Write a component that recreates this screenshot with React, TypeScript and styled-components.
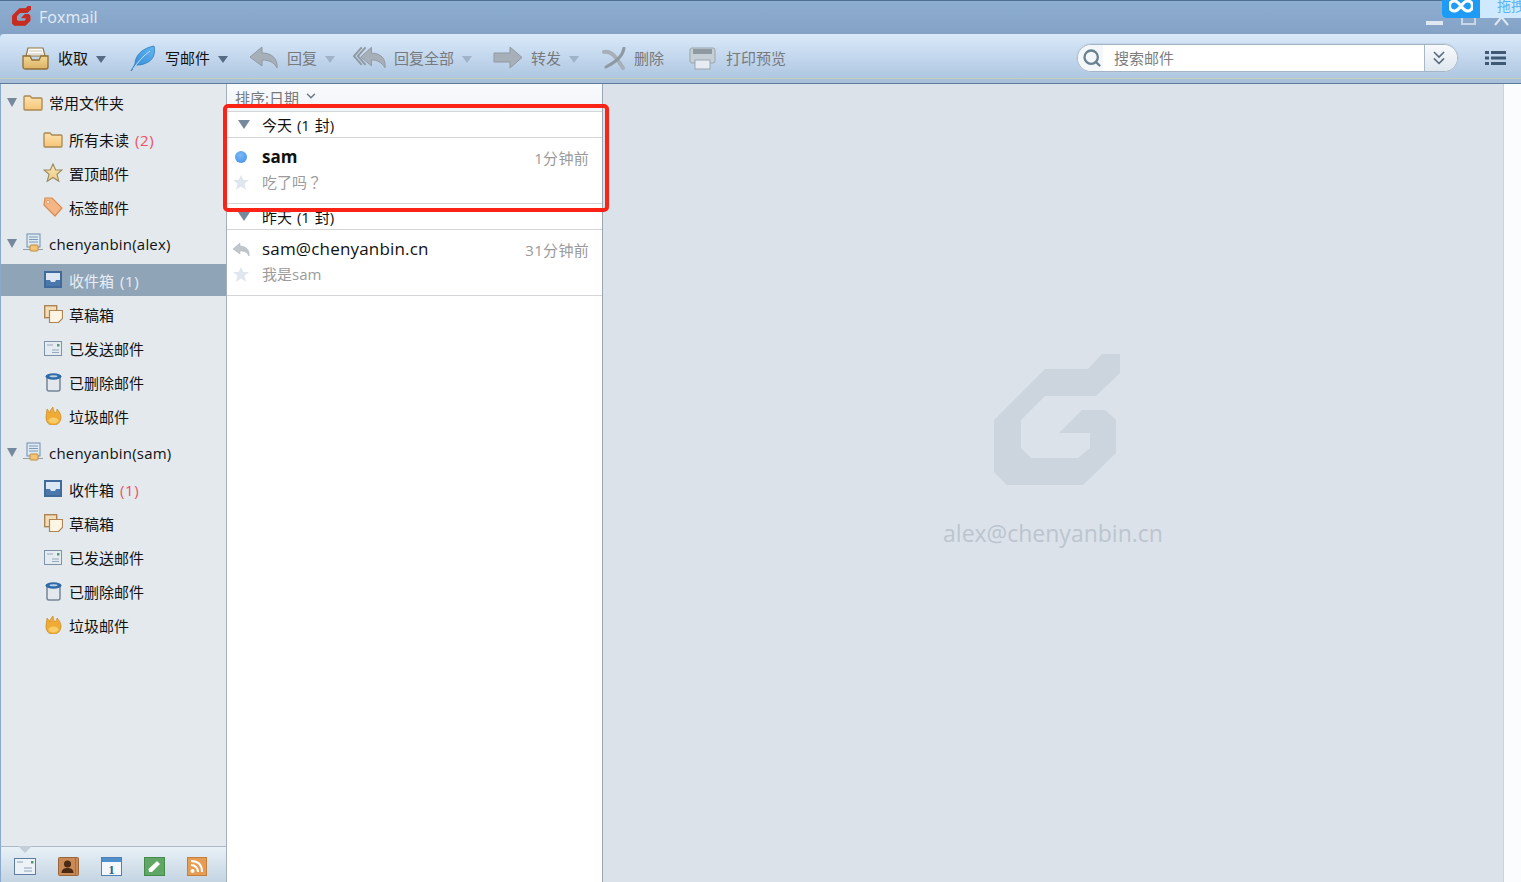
import React from "react";
import styled, { createGlobalStyle } from "styled-components";
import { Search, ChevronsDown, ChevronDown } from "lucide-react";

const Global = createGlobalStyle`
  html, body { margin: 0; padding: 0; height: 100%; overflow: hidden; background: #dbe2e9; }
  #root { height: 100%; }
  * { box-sizing: border-box; }
`;

const FONT = `"Open Sans", "Noto Sans CJK SC", sans-serif`;

const Window = styled.div`
  position: relative;
  width: 1521px;
  height: 882px;
  display: flex;
  flex-direction: column;
  overflow: hidden;
  font-family: ${FONT};
  font-size: 15px;
  color: #111;
  background: #8aa9cc;
`;

const TitleBar = styled.div`
  height: 34px;
  flex: none;
  display: flex;
  align-items: center;
  gap: 8px;
  padding: 0 0 0 12px;
  border-top: 1px solid #4e6e92;
  background: linear-gradient(#8eaed1, #83a2c6);
`;

const LogoSlot = styled.span`
  display: flex;
  margin-top: -3px;
`;

const AppTitle = styled.span`
  color: #e3ecf5;
  font-size: 16px;
  letter-spacing: 0.1px;
  margin-top: -1px;
`;

const WinControls = styled.div`
  position: absolute;
  top: 14px;
  right: 12px;
  display: flex;
  align-items: flex-start;
  gap: 18px;
  height: 12px;
`;

const DragWidget = styled.div`
  position: absolute;
  top: 0;
  right: 0;
  width: 79px;
  height: 18px;
  display: flex;
  overflow: hidden;
  border-bottom-left-radius: 4px;
  background: #cfeaff;
`;

const DragBlue = styled.div`
  width: 38px;
  flex: none;
  display: flex;
  align-items: flex-start;
  justify-content: center;
  background: #1e9cf5;
`;

const DragText = styled.span`
  font-size: 14px;
  line-height: 12px;
  color: #58b4f4;
  margin-left: 17px;
  white-space: nowrap;
`;

const Toolbar = styled.div`
  height: 50px;
  flex: none;
  display: flex;
  align-items: center;
  padding: 0 15px 1px 22px;
  border-radius: 4px 0 0 0;
  border-bottom: 1px solid #5e7a98;
  box-shadow: inset 0 -4px 0 #a9c0da, inset 0 -5px 0 #c2d0bd;
  background: linear-gradient(#d9e9f9, #aac3df);
`;

const ToolItem = styled.div<{ $after: number }>`
  display: flex;
  align-items: center;
  margin-right: ${(p) => p.$after}px;
`;

const ToolLabel = styled.span<{ $off?: boolean }>`
  font-size: 15px;
  white-space: nowrap;
  margin-top: -2px;
  margin-left: ${(p) => (p.$off ? 8 : 9)}px;
  color: ${(p) => (p.$off ? "#77797c" : "#111")};
`;

const Caret = styled.i<{ $off?: boolean }>`
  display: block;
  width: 0;
  height: 0;
  margin-left: 8px;
  margin-top: 2px;
  border-left: 5px solid transparent;
  border-right: 5px solid transparent;
  border-top: 7px solid ${(p) => (p.$off ? "#a0b3c9" : "#566c85")};
`;

const SearchBox = styled.div`
  margin-left: auto;
  width: 381px;
  height: 28px;
  display: flex;
  align-items: stretch;
  border: 1px solid #a5b5c8;
  border-radius: 14px;
  overflow: hidden;
  background: #fff;
  box-shadow: 0 0 0 1px rgba(190, 205, 222, 0.6);
`;

const SearchIcon = styled.div`
  width: 25px;
  flex: none;
  display: flex;
  align-items: center;
  justify-content: center;
  padding-left: 3px;
  color: #68808f;
  background: #f4f7fa;
`;

const SearchInput = styled.div`
  flex: 1;
  display: flex;
  align-items: center;
  padding: 0 0 2px 11px;
  font-size: 15px;
  color: #7d7d7d;
`;

const SearchDrop = styled.div`
  width: 33px;
  flex: none;
  display: flex;
  align-items: center;
  justify-content: center;
  padding-right: 4px;
  color: #5a6c80;
  border-left: 1px solid #a9b7c6;
  background: linear-gradient(#f8fafc, #dfe7ef);
`;

const MenuButton = styled.div`
  margin-left: 27px;
  display: flex;
  align-items: center;
`;

const Body = styled.div`
  flex: 1;
  min-height: 0;
  display: flex;
`;

const Sidebar = styled.aside`
  width: 227px;
  flex: none;
  display: flex;
  flex-direction: column;
  background: #e4e9ee;
  border-left: 1px solid #8ba9cd;
  border-right: 1px solid #a3afbb;
`;

const Tree = styled.div`
  flex: 1;
  padding-top: 1px;
  display: flex;
  flex-direction: column;
  gap: 2px;
`;

const Section = styled.section`
  display: flex;
  flex-direction: column;
`;

const SectionHead = styled.div`
  height: 34px;
  margin-bottom: 3px;
  display: flex;
  align-items: center;
  padding-left: 6px;
  gap: 6px;
  white-space: nowrap;
`;

const AccountName = styled.span`
  letter-spacing: 0.2px;
  padding-top: 2px;
`;

const Tri = styled.i<{ $big?: boolean }>`
  display: block;
  flex: none;
  width: 0;
  height: 0;
  border-left: ${(p) => (p.$big ? 6 : 5.5)}px solid transparent;
  border-right: ${(p) => (p.$big ? 6 : 5.5)}px solid transparent;
  border-top: 9px solid #75889c;
`;

const FolderRow = styled.div<{ $active?: boolean }>`
  height: 34px;
  display: flex;
  align-items: center;
  padding-left: 42px;
  gap: 6px;
  white-space: nowrap;
  border-top: 1px solid transparent;
  border-bottom: 1px solid transparent;
  background-clip: padding-box;
  background-color: ${(p) => (p.$active ? "#90a4b8" : "transparent")};
  color: ${(p) => (p.$active ? "#e8eef4" : "#111")};
`;

const IconSlot = styled.span`
  width: 20px;
  height: 20px;
  flex: none;
  display: flex;
  align-items: center;
  justify-content: center;
`;

const Count = styled.span<{ $red?: boolean }>`
  margin-left: 6px;
  letter-spacing: 0.6px;
  color: ${(p) => (p.$red ? "#f0505f" : "inherit")};
`;

const Dock = styled.div`
  height: 36px;
  flex: none;
  position: relative;
  display: flex;
  align-items: center;
  gap: 22px;
  padding: 4px 0 0 13px;
  border-top: 1px solid #a9b9c7;
  background: linear-gradient(#e8f1f7, #c4d4e2);
`;

const Notch = styled.i`
  position: absolute;
  top: -1px;
  left: 17px;
  width: 14px;
  height: 7px;
  background: #c4ced8;
  clip-path: polygon(0 0, 100% 0, 50% 100%);
`;

const ListPane = styled.div`
  width: 376px;
  flex: none;
  display: flex;
  flex-direction: column;
  background: #fff;
  border-right: 1px solid #9aa6b2;
`;

const SortBar = styled.div`
  height: 28px;
  flex: none;
  display: flex;
  align-items: flex-end;
  gap: 5px;
  padding: 0 0 3px 8px;
  font-size: 15px;
  line-height: 20px;
  color: #77797c;
  background: linear-gradient(#f8fafc, #f2f5f8);
  border-bottom: 1px solid #d3d7db;
`;

const GroupHead = styled.div`
  height: 26px;
  flex: none;
  display: flex;
  align-items: center;
  gap: 12px;
  padding-left: 11px;
  border-bottom: 1px solid #d3d5d8;
  font-size: 15px;
  word-spacing: 1px;
`;

const Mail = styled.div`
  height: 66px;
  flex: none;
  display: grid;
  grid-template-columns: 35px 1fr auto;
  grid-template-rows: 20px 20px;
  row-gap: 5px;
  align-items: center;
  padding: 8px 13px 0 0;
  border-bottom: 1px solid #d3d5d8;
`;

const MailMark = styled.div`
  display: flex;
  justify-content: center;
  padding-right: 7px;
  margin-top: 2px;
`;

const Sender = styled.div<{ $unread?: boolean }>`
  font-size: 17px;
  letter-spacing: ${(p) => (p.$unread ? 0 : 0.18)}px;
  font-weight: ${(p) => (p.$unread ? 700 : 400)};
  color: #111;
`;

const When = styled.div`
  font-size: 15px;
  letter-spacing: 0.3px;
  color: #9a9a9a;
  margin-top: 3px;
`;

const Preview = styled.div`
  grid-column: 2 / 4;
  font-family: "Open Sans", "Noto Sans CJK TC", sans-serif;
  font-size: 15px;
  color: #9b9b9b;
`;

const Dot = styled.i`
  display: block;
  width: 12px;
  height: 12px;
  border-radius: 50%;
  background: radial-gradient(circle at 45% 35%, #7bb8f7, #3f8fe8);
`;

const Reading = styled.main`
  flex: 1;
  display: flex;
  flex-direction: column;
  align-items: center;
  padding-top: 270px;
  background: #dbe2e9;
`;

const Watermark = styled.div`
  display: flex;
  margin-left: 8px;
`;

const Account = styled.div`
  margin-top: 31px;
  font-size: 23px;
  line-height: 34px;
  color: #bcc5cf;
`;

const RightStrip = styled.div`
  width: 18px;
  flex: none;
  background: #fbfcfd;
  border-left: 1px solid #c9d1d9;
`;

const RedMark = styled.div`
  position: absolute;
  left: 223px;
  top: 104px;
  width: 386px;
  height: 108px;
  border: 4px solid #fb2216;
  border-radius: 5px;
  pointer-events: none;
`;

/* ---------- drawings ---------- */

const G_POINTS =
  "108,0 126,0 126,19 102,42 51,42 27,66 27,94 37,104 84,104 96,94 96,79 65,79 88,56 111,56 122,66 122,99 89,131 13,131 0,118 0,66 51,15 94,15";

const GLogo = ({ size, color, bold }: { size: number; color: string; bold?: boolean }) => (
  <svg width={size} height={(size * 131) / 126} viewBox={bold ? "-4 -4 134 139" : "0 0 126 131"}>
    <polygon points={G_POINTS} fill={color} stroke={bold ? color : "none"} strokeWidth={bold ? 8 : 0} strokeLinejoin="round" />
  </svg>
);

const SharedDefs = () => (
  <svg width="0" height="0" style={{ position: "absolute" }}>
    <defs>
      <linearGradient id="folderFill" x1="0" y1="0" x2="0" y2="1">
        <stop offset="0" stopColor="#fde3ae" />
        <stop offset="1" stopColor="#f6c477" />
      </linearGradient>
      <linearGradient id="starFill" x1="0" y1="0" x2="0" y2="1">
        <stop offset="0" stopColor="#f9e5b4" />
        <stop offset="1" stopColor="#eecb85" />
      </linearGradient>
      <linearGradient id="featherFill" x1="1" y1="0" x2="0" y2="1">
        <stop offset="0" stopColor="#62b6f2" />
        <stop offset="1" stopColor="#2f86d3" />
      </linearGradient>
      <linearGradient id="trayFill" x1="0" y1="0" x2="0" y2="1">
        <stop offset="0" stopColor="#f3d794" />
        <stop offset="1" stopColor="#dcb264" />
      </linearGradient>
    </defs>
  </svg>
);

const InboxTray = () => (
  <svg width="27" height="24" viewBox="0 0 27 24">
    <path d="M6 2h15l2 8H4z" fill="#fff" stroke="#8f7440" strokeWidth="1.200" />
    <path d="M7 5h13M6 8h15" stroke="#c9c0ae" />
    <path d="M1 10h7l2 4h7l2-4h7v11a2 2 0 0 1-2 2H3a2 2 0 0 1-2-2z" fill="url(#trayFill)" stroke="#8f6f35" strokeWidth="1.300" />
  </svg>
);

const Feather = () => (
  <svg width="26" height="27" viewBox="0 0 26 27">
    <path d="M1 26 5 19C5 10 13 3 24 1c2 9-2 15-8 17-4 2-7 2-10 2z" fill="url(#featherFill)" stroke="#2a78bd" strokeWidth="0.800" />
    <path d="M3 24C8 17 13 11 20 6" stroke="#bfe0f8" strokeWidth="1" fill="none" />
  </svg>
);

const GRAY = "#a7b0b8";
const GRAYD = "#8f99a2";

const Reply = () => (
  <svg width="30" height="24" viewBox="0 0 30 24">
    <path d="M13 1 1 11l12 9v-6c7 0 12 2 15 8 1-9-5-15-15-15z" fill={GRAY} stroke={GRAYD} strokeLinejoin="round" />
  </svg>
);

const ReplyAll = () => (
  <svg width="33" height="24" viewBox="0 0 34 24">
    <path d="M9 1 1 10l8 9" fill="none" stroke={GRAYD} strokeWidth="2" />
    <path d="M13 1 5 10l8 9" fill="none" stroke={GRAYD} strokeWidth="2" />
    <path d="M19 1 8 11l11 9v-6c6 0 10 2 14 8 1-9-4-15-14-15z" fill={GRAY} stroke={GRAYD} strokeLinejoin="round" />
  </svg>
);

const Forward = () => (
  <svg width="30" height="24" viewBox="0 0 30 24">
    <path d="M1 7h16V1l12 10.500L17 22v-6H1z" fill={GRAY} stroke={GRAYD} strokeLinejoin="round" />
  </svg>
);

const DeleteX = () => (
  <svg width="24" height="23" viewBox="0 0 24 23">
    <path d="M2 5C9 3 14 10 21 21" fill="none" stroke={GRAY} strokeWidth="4" strokeLinecap="round" />
    <path d="M22 1C21 9 14 15 4 20" fill="none" stroke={GRAYD} strokeWidth="3" strokeLinecap="round" />
  </svg>
);

const Printer = () => (
  <svg width="29" height="23" viewBox="0 0 29 23">
    <rect x="1" y="1" width="25" height="15" rx="2" fill="#c6ced6" stroke="#9aa5af" />
    <rect x="4" y="2" width="19" height="5" fill="#8f99a2" />
    <rect x="6" y="13" width="15" height="9" fill="#e6ecf2" stroke="#9aa5af" />
  </svg>
);

const InfinityMark = () => (
  <svg width="24" height="13" viewBox="0 0 24 13">
    <path d="M12 6C9 2 7.500 1 5.500 1a5 5 0 0 0 0 10c2 0 3.500-1 6.500-5s4.500-5 6.500-5a5 5 0 0 1 0 10c-2 0-3.500-1-6.500-5z" fill="none" stroke="#fff" strokeWidth="3.200" />
  </svg>
);

const ListMenu = () => (
  <svg width="21" height="16" viewBox="0 0 21 16">
    <g fill="#3f5873">
      <rect x="0" y="1" width="4" height="3" />
      <rect x="6" y="1" width="15" height="3" />
      <rect x="0" y="6.500" width="4" height="3" />
      <rect x="6" y="6.500" width="15" height="3" />
      <rect x="0" y="12" width="4" height="3" />
      <rect x="6" y="12" width="15" height="3" />
    </g>
  </svg>
);

const FolderIco = () => (
  <svg width="20" height="17" viewBox="0 0 20 17">
    <path d="M1 3a1 1 0 0 1 1-1h5l2 2h9a1 1 0 0 1 1 1v10a1 1 0 0 1-1 1H2a1 1 0 0 1-1-1z" fill="url(#folderFill)" stroke="#a98850" strokeWidth="1.300" />
  </svg>
);

const StarIco = () => (
  <svg width="20" height="20" viewBox="0 0 20 20">
    <path d="m10 1 2.700 6h6.300l-5 4.300 1.800 7L10 14.500 4.200 18.300l1.800-7L1 7h6.300z" fill="url(#starFill)" stroke="#9a8960" strokeWidth="1.100" />
  </svg>
);

const TagIco = () => (
  <svg width="20" height="20" viewBox="0 0 20 20">
    <path d="M2 1h7l10 10-7 8L1 8z" fill="#f5b584" stroke="#d98b4e" strokeWidth="1.200" />
    <circle cx="5" cy="5" r="1.500" fill="#fff" stroke="#c9793c" strokeWidth="0.600" />
  </svg>
);

const ServerIco = () => (
  <svg width="20" height="20" viewBox="0 0 20 20">
    <rect x="4" y="1" width="13" height="13" fill="#dfe9f2" stroke="#6f8eae" />
    <path d="M6 4h9M6 6.500h9M6 9h9" stroke="#7d9ab8" />
    <path d="M0 16.500h20" stroke="#8e9dab" />
    <rect x="7" y="12" width="8" height="6" rx="1" fill="#f2c576" stroke="#c08c3a" />
  </svg>
);

const InboxIco = () => (
  <svg width="18" height="18" viewBox="0 0 18 18">
    <rect x="1" y="1" width="16" height="15" fill="#dbe8f4" stroke="#3f6a9b" strokeWidth="2" />
    <path d="M2 9h4l1 2h4l1-2h4v6H2z" fill="#4a78ab" />
  </svg>
);

const DraftIco = () => (
  <svg width="19" height="18" viewBox="0 0 19 18">
    <rect x="0.700" y="0.700" width="12" height="12" fill="#f3dcb8" stroke="#ad8555" strokeWidth="1.400" />
    <path d="M5.500 5.500h13v8l-4 4h-9z" fill="#fdf5e4" stroke="#ad8555" strokeWidth="1.200" />
  </svg>
);

const SentIco = () => (
  <svg width="18" height="15" viewBox="0 0 18 15">
    <rect x="0.500" y="0.500" width="17" height="14" fill="#e4ebf1" stroke="#7f93a8" />
    <path d="M3 4h6M8 9h7M8 11.500h7" stroke="#97a8b8" />
    <rect x="13" y="3" width="2.500" height="2.500" fill="#5b9a78" />
  </svg>
);

const TrashIco = () => (
  <svg width="17" height="19" viewBox="0 0 17 19">
    <path d="M2 4h13v12a2 2 0 0 1-2 2H4a2 2 0 0 1-2-2z" fill="#e3e8ee" stroke="#768595" strokeWidth="1.500" />
    <ellipse cx="8.500" cy="3.500" rx="8" ry="3.200" fill="#2f6aa6" />
    <ellipse cx="8.500" cy="3.300" rx="4" ry="1" fill="#b9d3ea" />
  </svg>
);

const FireIco = () => (
  <svg width="17" height="18" viewBox="0 0 17 18">
    <path d="M1 10c0-3 1-5 1-8 1 1 2 2 3 4 0-2 1-4 3-6 0 3 1 4 2 6 1-1 2-2 2-4 2 2 4 5 4 8 0 5-3 8-8 8s-7-3-7-8z" fill="#f0ab35" stroke="#c98a22" strokeWidth="0.700" />
    <ellipse cx="8.500" cy="13.500" rx="5" ry="3" fill="#f8cd68" />
  </svg>
);

const TinyStar = () => (
  <svg width="16" height="15" viewBox="0 0 16 15">
    <path d="m8 0 2.300 5H16l-4.500 3.700L13 15 8 11.500 3 15l1.500-6.300L0 5h5.700z" fill="#dfe6ee" />
  </svg>
);

const TinyReply = () => (
  <svg width="17" height="13" viewBox="0 0 17 13">
    <path d="M7 0 0 6l7 5V8c4 0 7 1 9 5 1-6-3-10-9-10z" fill="#c0c6cc" stroke="#aab1b8" strokeWidth="0.500" />
  </svg>
);

const DockMail = () => (
  <svg width="22" height="17" viewBox="0 0 22 17">
    <rect x="0.500" y="0.500" width="21" height="16" fill="#edf2f7" stroke="#5f7da3" />
    <path d="M3 4h6M10 10h8M10 13h8" stroke="#8ea4bc" />
    <rect x="17" y="3" width="2.500" height="2.500" fill="#4d9a6f" />
  </svg>
);

const DockContacts = () => (
  <svg width="21" height="19" viewBox="0 0 21 19">
    <rect x="0.500" y="0.500" width="20" height="18" rx="1" fill="#c98a56" stroke="#9a6538" />
    <path d="M17.500 1v17" stroke="#a9703f" />
    <circle cx="9.500" cy="7" r="3.500" fill="#4a2a12" />
    <path d="M3.500 16c0-4 3-5 6-5s6 1 6 5z" fill="#4a2a12" />
  </svg>
);

const DockCal = () => (
  <svg width="21" height="19" viewBox="0 0 21 19">
    <rect x="0.500" y="0.500" width="20" height="18" fill="#f3f7fb" stroke="#4f80b0" />
    <rect x="1" y="1" width="19" height="4" fill="#4f8fca" />
    <text x="10.500" y="17" fontSize="13" fontWeight="700" fontFamily="Liberation Serif, serif" textAnchor="middle" fill="#2c6397">1</text>
  </svg>
);

const DockNote = () => (
  <svg width="21" height="19" viewBox="0 0 21 19">
    <rect x="0.500" y="0.500" width="20" height="18" fill="#5fa765" stroke="#478a4d" />
    <path d="M5 15 4.500 12 13 4l3 3-8 8z" fill="#fff" />
  </svg>
);

const DockRss = () => (
  <svg width="20" height="19" viewBox="0 0 20 19">
    <rect x="0.500" y="0.500" width="19" height="18" fill="#e79c54" stroke="#c47f3c" />
    <circle cx="5.500" cy="14" r="2" fill="#fff" />
    <path d="M4 8c4 0 7 3 7 7M4 4c7 0 11 4 11 11" fill="none" stroke="#fff" strokeWidth="2" />
  </svg>
);

/* ---------- data ---------- */

const accountFolders = (red: boolean) => [
  { icon: <InboxIco />, name: "收件箱", count: "(1)", red },
  { icon: <DraftIco />, name: "草稿箱" },
  { icon: <SentIco />, name: "已发送邮件" },
  { icon: <TrashIco />, name: "已删除邮件" },
  { icon: <FireIco />, name: "垃圾邮件" },
];

const Folders = ({ red }: { red: boolean }) => (
  <>
    {accountFolders(red).map((f, i) => (
      <FolderRow key={f.name} $active={i === 0 && !red}>
        <IconSlot>{f.icon}</IconSlot>
        <span>
          {f.name}
          {f.count && <Count $red={f.red}>{f.count}</Count>}
        </span>
      </FolderRow>
    ))}
  </>
);

export default function App() {
  return (
    <Window>
      <Global />
      <SharedDefs />
      <TitleBar>
        <LogoSlot><GLogo size={19} color="#c62c20" bold /></LogoSlot>
        <AppTitle>Foxmail</AppTitle>
      </TitleBar>
      <WinControls>
        <svg width="17" height="12" viewBox="0 0 17 12"><rect y="7" width="17" height="4" fill="#dfe8f2" /></svg>
        <svg width="15" height="12" viewBox="0 0 15 12"><rect x="1" y="-4" width="13" height="14" fill="none" stroke="#c8d7e8" strokeWidth="2" /></svg>
        <svg width="15" height="12" viewBox="0 0 15 12"><path d="M1 11 7.500 3 14 11" fill="none" stroke="#dfe8f2" strokeWidth="2" /></svg>
      </WinControls>
      <DragWidget>
        <DragBlue><InfinityMark /></DragBlue>
        <DragText>拖拽</DragText>
      </DragWidget>

      <Toolbar>
        <ToolItem $after={24}>
          <InboxTray />
          <ToolLabel>收取</ToolLabel>
          <Caret />
        </ToolItem>
        <ToolItem $after={21}>
          <Feather />
          <ToolLabel>写邮件</ToolLabel>
          <Caret />
        </ToolItem>
        <ToolItem $after={18}>
          <Reply />
          <ToolLabel $off>回复</ToolLabel>
          <Caret $off />
        </ToolItem>
        <ToolItem $after={21}>
          <ReplyAll />
          <ToolLabel $off>回复全部</ToolLabel>
          <Caret $off />
        </ToolItem>
        <ToolItem $after={23}>
          <Forward />
          <ToolLabel $off>转发</ToolLabel>
          <Caret $off />
        </ToolItem>
        <ToolItem $after={25}>
          <DeleteX />
          <ToolLabel $off>删除</ToolLabel>
        </ToolItem>
        <ToolItem $after={0}>
          <Printer />
          <ToolLabel $off>打印预览</ToolLabel>
        </ToolItem>
        <SearchBox>
          <SearchIcon><Search size={20} strokeWidth={2.8} /></SearchIcon>
          <SearchInput>搜索邮件</SearchInput>
          <SearchDrop><ChevronsDown size={22} strokeWidth={1.8} /></SearchDrop>
        </SearchBox>
        <MenuButton><ListMenu /></MenuButton>
      </Toolbar>

      <Body>
        <Sidebar>
          <Tree>
            <Section>
              <SectionHead><Tri /><FolderIco /><span>常用文件夹</span></SectionHead>
              <FolderRow>
                <IconSlot><FolderIco /></IconSlot>
                <span>所有未读<Count $red>(2)</Count></span>
              </FolderRow>
              <FolderRow>
                <IconSlot><StarIco /></IconSlot>
                <span>置顶邮件</span>
              </FolderRow>
              <FolderRow>
                <IconSlot><TagIco /></IconSlot>
                <span>标签邮件</span>
              </FolderRow>
            </Section>
            <Section>
              <SectionHead><Tri /><ServerIco /><AccountName>chenyanbin(alex)</AccountName></SectionHead>
              <Folders red={false} />
            </Section>
            <Section>
              <SectionHead><Tri /><ServerIco /><AccountName>chenyanbin(sam)</AccountName></SectionHead>
              <Folders red />
            </Section>
          </Tree>
          <Dock>
            <Notch />
            <DockMail />
            <DockContacts />
            <DockCal />
            <DockNote />
            <DockRss />
          </Dock>
        </Sidebar>

        <ListPane>
          <SortBar>
            <span>排序:日期</span>
            <ChevronDown size={14} strokeWidth={2.6} color="#6f7a85" style={{ marginBottom: 5 }} />
          </SortBar>
          <GroupHead><Tri $big /><span>今天 (1 封)</span></GroupHead>
          <Mail>
            <MailMark><Dot /></MailMark>
            <Sender $unread>sam</Sender>
            <When>1分钟前</When>
            <MailMark><TinyStar /></MailMark>
            <Preview>吃了吗？</Preview>
          </Mail>
          <GroupHead><Tri $big /><span>昨天 (1 封)</span></GroupHead>
          <Mail>
            <MailMark><TinyReply /></MailMark>
            <Sender>sam@chenyanbin.cn</Sender>
            <When>31分钟前</When>
            <MailMark><TinyStar /></MailMark>
            <Preview>我是sam</Preview>
          </Mail>
        </ListPane>

        <Reading>
          <Watermark>
            <GLogo size={126} color="#ccd4dd" />
          </Watermark>
          <Account>alex@chenyanbin.cn</Account>
        </Reading>
        <RightStrip />
      </Body>
      <RedMark />
    </Window>
  );
}
